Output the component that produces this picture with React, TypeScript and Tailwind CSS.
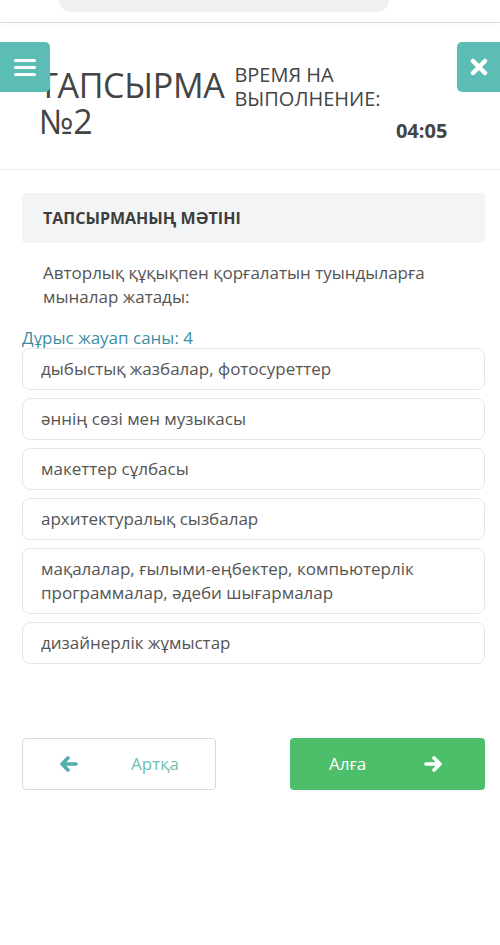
import React from "react";

const options = [
  "дыбыстық жазбалар, фотосуреттер",
  "әннің сөзі мен музыкасы",
  "макеттер сұлбасы",
  "архитектуралық сызбалар",
  "мақалалар, ғылыми-еңбектер, компьютерлік программалар, әдеби шығармалар",
  "дизайнерлік жұмыстар",
];

export default function App() {
  return (
    <div
      className="w-[500px] h-[945px] bg-white overflow-hidden text-[#555]"
      style={{ fontFamily: '"Open Sans", "Noto Sans", sans-serif' }}
    >
      {/* top browser bar */}
      <div className="h-[22px] flex justify-center">
        <div className="w-[330px] h-[12px] bg-[#f0f1f3] rounded-b-[14px] ml-[-52px]" />
      </div>
      <div className="h-[1px] bg-[#dcdcdc] shadow-[0_2px_4px_rgba(0,0,0,0.08)]" />

      {/* header */}
      <div className="relative h-[147px] border-b border-[#eeeeee]">
        <div className="flex pt-[38px]">
          <div className="ml-[39px] mt-[6px] text-[34px] leading-[36px] text-[#444] tracking-[-0.3px]">
            <div>ТАПСЫРМА</div>
            <div>№2</div>
          </div>
          <div className="ml-[10px] pt-[2px] w-[213px]">
            <div className="text-[20px] leading-[24px] text-[#444]">
              ВРЕМЯ НА
              <br />
              ВЫПОЛНЕНИЕ:
            </div>
            <div className="text-right text-[20px] font-bold leading-[24px] text-[#444] mt-[8px]">
              04:05
            </div>
          </div>
        </div>
        <button className="absolute left-0 top-[19px] w-[50px] h-[50px] bg-[#5bbdb4] rounded-r-[5px] flex flex-col items-center justify-center gap-[4px]">
          <span className="block w-[22px] h-[3px] bg-white rounded-sm" />
          <span className="block w-[22px] h-[3px] bg-white rounded-sm" />
          <span className="block w-[22px] h-[3px] bg-white rounded-sm" />
        </button>
        <button className="absolute right-0 top-[19px] w-[43px] h-[50px] bg-[#5bbdb4] rounded-l-[5px] flex items-center justify-center">
          <svg width="18" height="18" viewBox="0 0 18 18">
            <path d="M3 3 L15 15 M15 3 L3 15" stroke="white" strokeWidth="4.5" strokeLinecap="round" />
          </svg>
        </button>
      </div>

      {/* content */}
      <div className="pl-[22px] pr-[15px] pt-[23px]">
        <div className="h-[50px] bg-[#f3f4f6] rounded-[4px] flex items-center px-[21px]">
          <span className="text-[16px] font-bold text-[#3d3d3d]">ТАПСЫРМАНЫҢ МӘТІНІ</span>
        </div>
        <div className="px-[21px] pt-[18px] text-[17px] leading-[24px] text-[#555]">
          Авторлық құқықпен қорғалатын туындыларға мыналар жатады:
        </div>
        <div className="mt-[18px] text-[17px] leading-[22px] text-[#3e8ea2]">Дұрыс жауап саны: 4</div>
        <div className="flex flex-col gap-[8px] mt-[-1px]">
          {options.map((o) => (
            <div
              key={o}
              className="border border-[#e6e6e6] rounded-[8px] px-[18px] py-[8px] text-[17px] leading-[24px] text-[#555] min-h-[42px]"
            >
              {o}
            </div>
          ))}
        </div>

        <div className="flex justify-between mt-[74px]">
          <button className="w-[194px] h-[52px] border border-[#d3dcdc] rounded-[4px] flex items-center text-[#6dbfb7] text-[17px]">
            <svg width="18" height="16" viewBox="0 0 18 16" className="ml-[37px]">
              <path d="M8 2 L2 8 L8 14 M2 8 L16 8" stroke="#4fb0a8" strokeWidth="3.6" fill="none" strokeLinecap="round" strokeLinejoin="round" />
            </svg>
            <span className="ml-[53px]">Артқа</span>
          </button>
          <button className="w-[195px] h-[52px] bg-[#4dbf6b] rounded-[4px] flex items-center text-white text-[17px]">
            <span className="ml-[39px]">Алға</span>
            <svg width="18" height="16" viewBox="0 0 18 16" className="ml-[58px]">
              <path d="M10 2 L16 8 L10 14 M16 8 L2 8" stroke="white" strokeWidth="3.6" fill="none" strokeLinecap="round" strokeLinejoin="round" />
            </svg>
          </button>
        </div>
      </div>
    </div>
  );
}
